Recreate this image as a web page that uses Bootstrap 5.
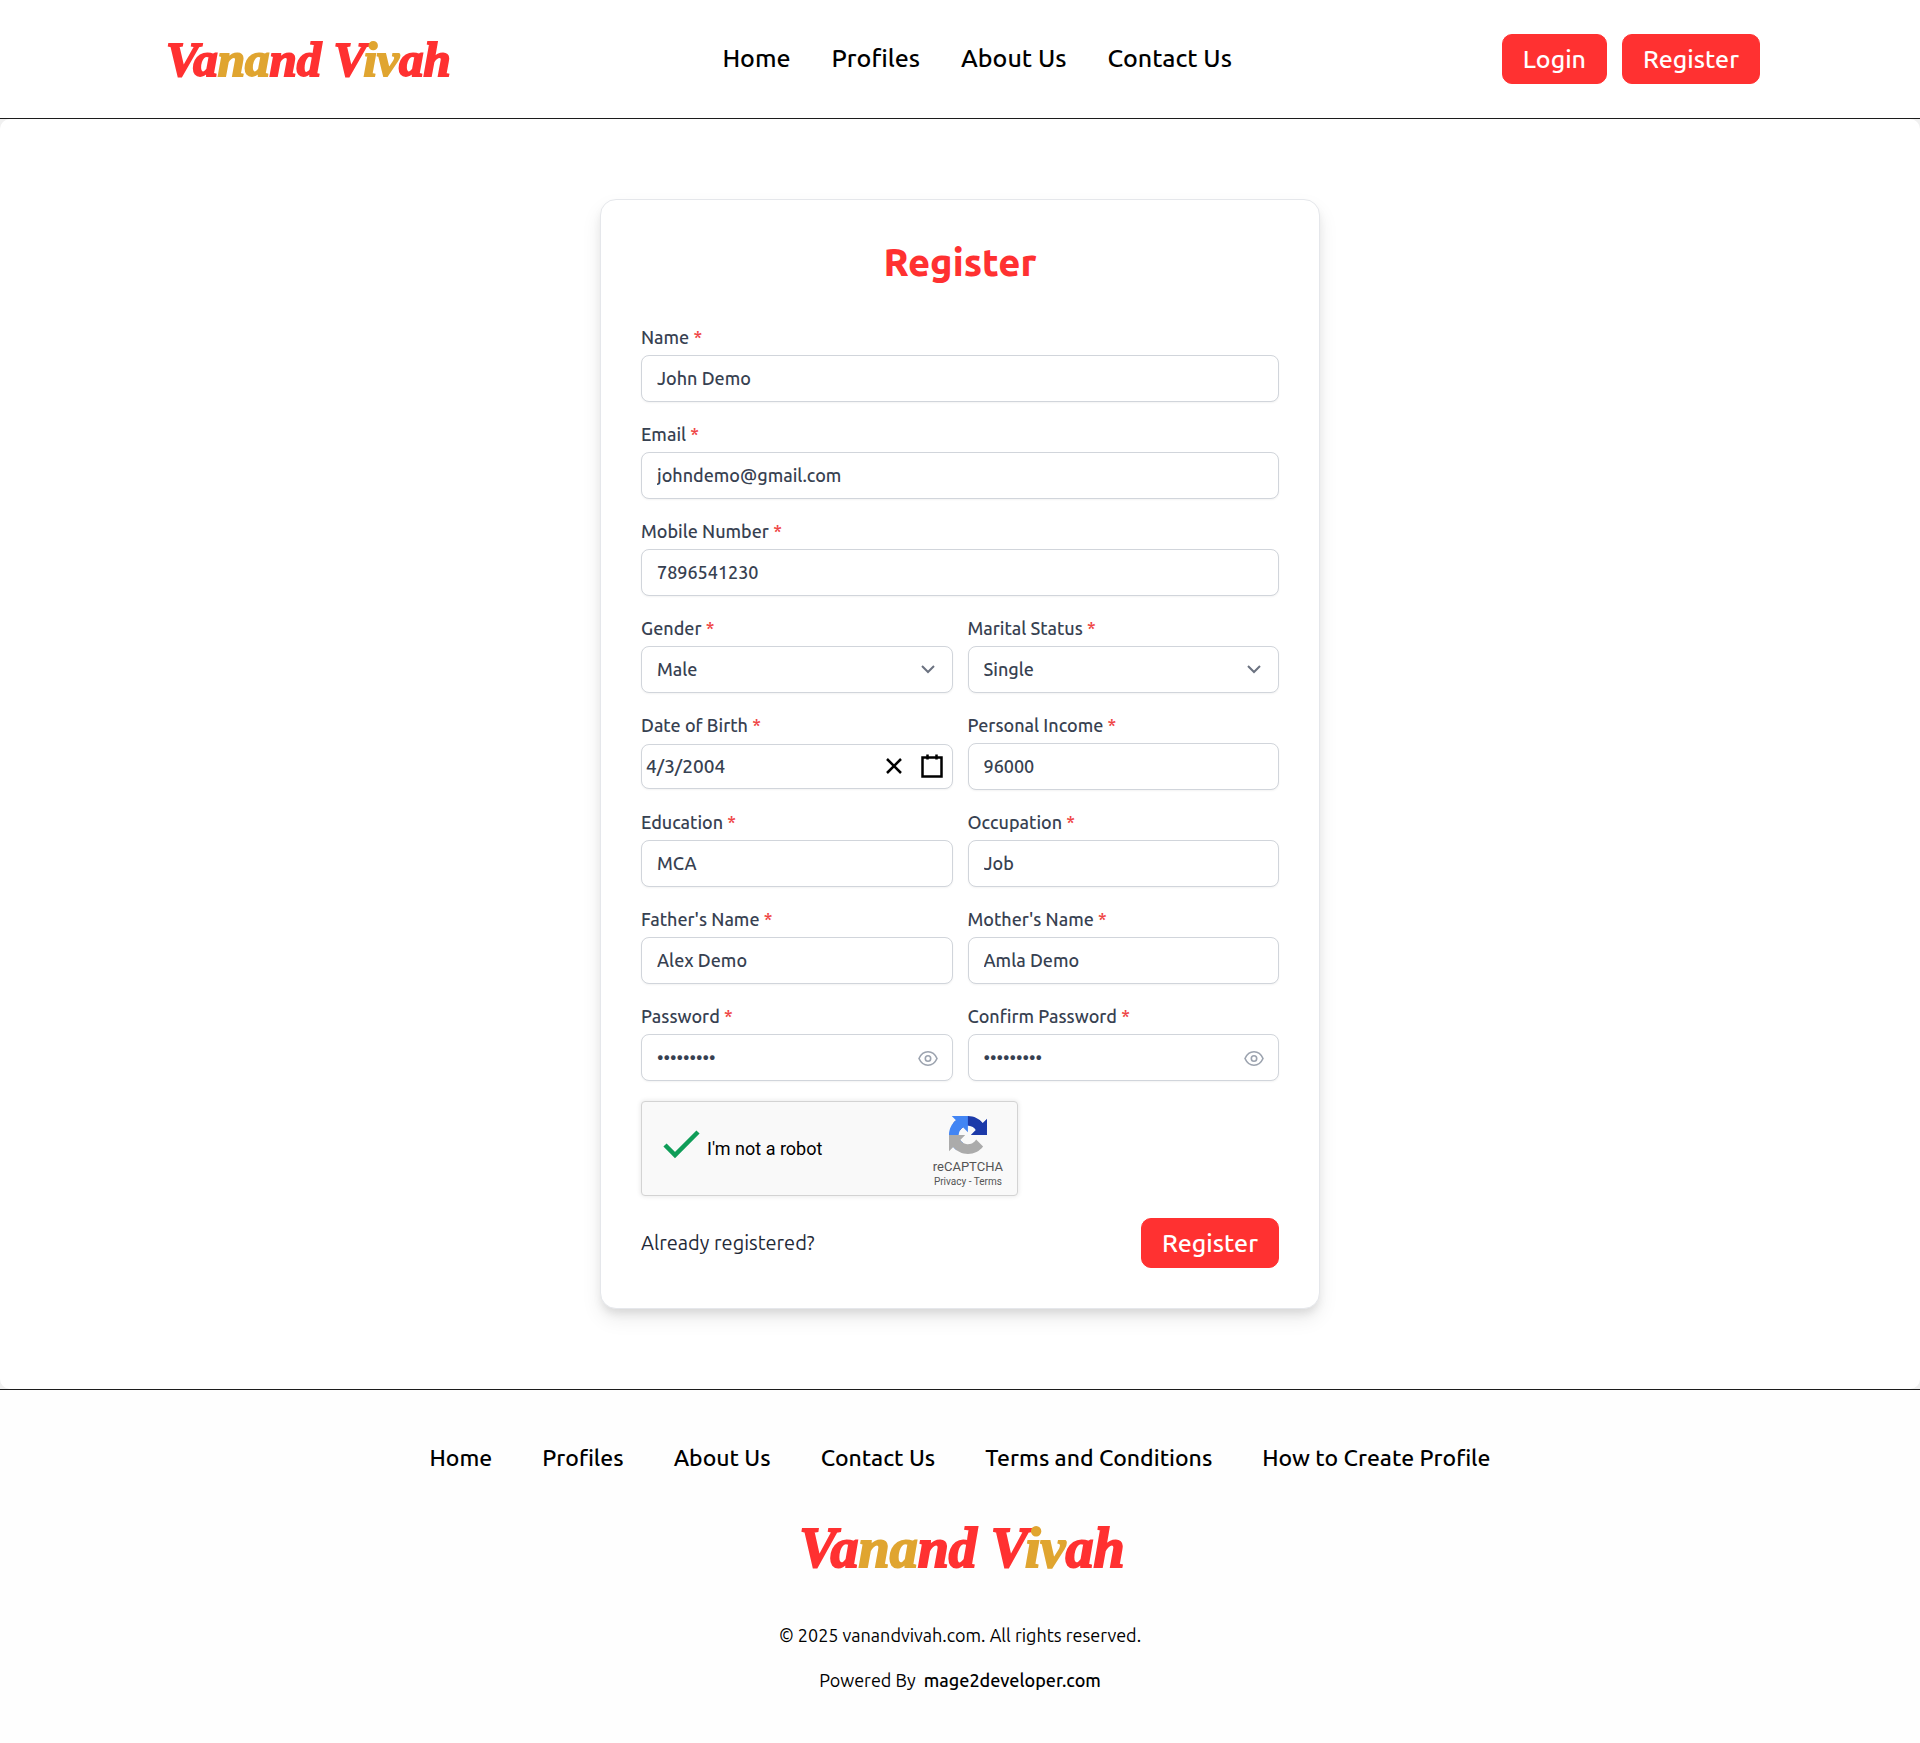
<!DOCTYPE html>
<html lang="en">
<head>
<meta charset="utf-8">
<meta name="viewport" content="width=device-width, initial-scale=1">
<title>Register - Vanand Vivah</title>
<link href="https://cdn.jsdelivr.net/npm/bootstrap@5.3.0/dist/css/bootstrap.min.css" rel="stylesheet">
<style>
  :root { --brand: #ff3131; --gold: #e0a530; --ink: #374151; --line: #d1d5db; }
  body { font-family: Ubuntu, "Noto Sans", sans-serif; background: #f0f0f0; color: #000; }
  a { color: inherit; text-decoration: none; }

  .site-header { background: #fff; border-bottom: 1px solid #1c1c1c; min-height: 119px; padding: 0 160px; }
  .site-links { gap: 41px; font-size: 25px; line-height: 36px; font-weight: 500; padding-bottom: 2px; }
  .account-buttons { gap: 15px; }
  .wordmark { font-family: "Liberation Serif", serif; font-weight: 700; font-style: italic; font-size: 49px; line-height: 56px; color: var(--brand); padding: 2px 2px 0 6px; -webkit-text-stroke: 2px currentColor; white-space: nowrap; }
  .wordmark span { color: var(--gold); }
  .wordmark-lg { font-size: 56px; line-height: 62px; margin-bottom: 44px; }

  .btn-brand { --bs-btn-color: #fff; --bs-btn-bg: var(--brand); --bs-btn-border-color: var(--brand); --bs-btn-hover-color: #fff; --bs-btn-hover-bg: #e62222; --bs-btn-hover-border-color: #e62222; --bs-btn-font-size: 25px; --bs-btn-font-weight: 500; --bs-btn-line-height: 34px; --bs-btn-padding-x: 20px; --bs-btn-padding-y: 7px; --bs-btn-border-radius: 10px; }

  .page-main { background: #fff; border-radius: 10px; padding: 80px 16px; }
  .register-card { max-width: 720px; padding: 40px; background: #fff; border: 1px solid #e5e7eb; border-radius: 16px; box-shadow: 0 10px 20px rgba(0,0,0,.08), 0 6px 10px -2px rgba(0,0,0,.1); }
  .register-title { color: var(--brand); font-size: 38px; font-weight: 800; line-height: 45px; margin-bottom: 40px; }

  .field-grid { --bs-gutter-x: 15px; --bs-gutter-y: 20px; margin-bottom: 20px; }
  .form-label { display: block; font-size: 18px; line-height: 24px; font-weight: 500; color: var(--ink); margin-bottom: 6px; }
  .form-label i { font-style: normal; color: #ef4444; }
  .form-control, .form-select { height: 47px; font-size: 18px; font-weight: 500; color: var(--ink); background-color: #fff; border: 1px solid var(--line); border-radius: 8px; padding: 0 15px 1px; box-shadow: 0 1px 2px rgba(0,0,0,.05); }
  .form-select { background-image: none; padding-right: 44px; }
  .field-icons { position: absolute; top: 0; bottom: 0; right: 15px; display: flex; align-items: center; }
  .field-icons button { border: 0; background: none; padding: 0; display: flex; }
  .chevron { pointer-events: none; right: 17px; }
  .date-box { padding: 1px 0; }
  .date-input { height: 45px; font-size: 19px; padding: 0 4px 1px; }
  .date-icons { right: 9px; gap: 14px; }

  .captcha { width: 377px; max-width: 100%; height: 95px; background: #f9f9f9; border: 1px solid #d3d3d3; border-radius: 4px; box-shadow: 0 0 4px 1px rgba(0,0,0,.08); font-family: Roboto, sans-serif; padding: 0 14px 0 20px; margin-bottom: 22px; }
  .captcha-label { font-size: 18px; line-height: 24px; gap: 7px; }
  .captcha-tick { appearance: none; width: 38px; height: 42px; margin: 0; background: none; }
  .captcha-brand { color: #555; font-size: 13px; line-height: 17px; padding-top: 7px; }
  .captcha-legal { font-size: 10px; line-height: 14px; }
  .already { font-size: 20px; line-height: 28px; color: #1f2937; }

  .site-footer { background: #fefefe; border-top: 1px solid #1c1c1c; padding: 52px 16px 50px; }
  .footer-links { gap: 10px 50px; font-size: 23px; line-height: 32px; font-weight: 500; margin-bottom: 41px; }
  .footer-note { font-size: 18px; line-height: 25px; }
</style>
</head>
<body>
<header class="site-header d-flex flex-wrap align-items-center justify-content-between">
  <a class="wordmark" href="#">Va<span>na</span>nd V<span>iv</span>ah</a>
  <nav class="site-links d-flex flex-wrap" aria-label="Main">
    <a href="#">Home</a><a href="#">Profiles</a><a href="#">About Us</a><a href="#">Contact Us</a>
  </nav>
  <div class="account-buttons d-flex">
    <button type="button" class="btn btn-brand">Login</button>
    <button type="button" class="btn btn-brand">Register</button>
  </div>
</header>

<main class="page-main">
  <form class="register-card mx-auto" onsubmit="return false">
    <h1 class="register-title text-center">Register</h1>
    <div class="row field-grid">
      <div class="col-12"><label class="form-label" for="name">Name <i>*</i></label><input class="form-control" id="name" value="John Demo"></div>
      <div class="col-12"><label class="form-label" for="email">Email <i>*</i></label><input class="form-control" type="email" id="email" value="johndemo@gmail.com"></div>
      <div class="col-12"><label class="form-label" for="mobile">Mobile Number <i>*</i></label><input class="form-control" type="tel" id="mobile" value="7896541230"></div>
      <div class="col-sm-6"><label class="form-label" for="gender">Gender <i>*</i></label>
        <div class="position-relative"><select class="form-select" id="gender"><option>Male</option><option>Female</option></select>
          <span class="field-icons chevron"><svg width="16" height="16" viewBox="0 0 16 16" fill="none" stroke="#6b7280" stroke-width="2"><path d="M2 4l6 6 6-6"/></svg></span></div></div>
      <div class="col-sm-6"><label class="form-label" for="marital">Marital Status <i>*</i></label>
        <div class="position-relative"><select class="form-select" id="marital"><option>Single</option><option>Divorced</option></select>
          <span class="field-icons chevron"><svg width="16" height="16" viewBox="0 0 16 16" fill="none" stroke="#6b7280" stroke-width="2"><path d="M2 4l6 6 6-6"/></svg></span></div></div>
      <div class="col-sm-6"><label class="form-label" for="dob">Date of Birth <i>*</i></label>
        <div class="date-box position-relative"><input class="form-control date-input" id="dob" value="4/3/2004">
          <span class="field-icons date-icons">
            <button type="button" aria-label="Clear date"><svg width="24" height="24" viewBox="0 0 24 24" fill="none" stroke="#000" stroke-width="2.5"><path d="M5 4l14 14M19 4L5 18"/></svg></button>
            <button type="button" aria-label="Open calendar"><svg width="24" height="26" viewBox="0 0 24 26" fill="none" stroke="#000" stroke-width="2.5"><path d="M2.500 3.500h19v19h-19zM7.500 .500v5M16.500 .500v5"/></svg></button>
          </span></div></div>
      <div class="col-sm-6"><label class="form-label" for="income">Personal Income <i>*</i></label><input class="form-control" id="income" value="96000"></div>
      <div class="col-sm-6"><label class="form-label" for="education">Education <i>*</i></label><input class="form-control" id="education" value="MCA"></div>
      <div class="col-sm-6"><label class="form-label" for="occupation">Occupation <i>*</i></label><input class="form-control" id="occupation" value="Job"></div>
      <div class="col-sm-6"><label class="form-label" for="father">Father's Name <i>*</i></label><input class="form-control" id="father" value="Alex Demo"></div>
      <div class="col-sm-6"><label class="form-label" for="mother">Mother's Name <i>*</i></label><input class="form-control" id="mother" value="Amla Demo"></div>
      <div class="col-sm-6"><label class="form-label" for="password">Password <i>*</i></label>
        <div class="position-relative"><input class="form-control" type="password" id="password" value="demo12345">
          <span class="field-icons"><button type="button" aria-label="Show password"><svg width="20" height="20" viewBox="0 0 20 20" fill="none" stroke="#9ca3af" stroke-width="1.600"><path d="M1 10.500C3 6 6 3.800 10 3.800s7 2.200 9 6.700c-2 4.500-5 6.700-9 6.700s-7-2.200-9-6.700z"/><circle cx="10" cy="10.500" r="2.700"/></svg></button></span></div></div>
      <div class="col-sm-6"><label class="form-label" for="confirm">Confirm Password <i>*</i></label>
        <div class="position-relative"><input class="form-control" type="password" id="confirm" value="demo12345">
          <span class="field-icons"><button type="button" aria-label="Show confirmed password"><svg width="20" height="20" viewBox="0 0 20 20" fill="none" stroke="#9ca3af" stroke-width="1.600"><path d="M1 10.500C3 6 6 3.800 10 3.800s7 2.200 9 6.700c-2 4.500-5 6.700-9 6.700s-7-2.200-9-6.700z"/><circle cx="10" cy="10.500" r="2.700"/></svg></button></span></div></div>
    </div>

    <div class="captcha d-flex align-items-center justify-content-between">
      <label class="captcha-label d-flex align-items-center" for="robot">
        <span class="position-relative d-flex"><input class="captcha-tick" type="checkbox" id="robot" checked>
          <svg class="position-absolute top-0 start-0" width="38" height="38" viewBox="0 0 38 38" fill="none" stroke="#0f9d58" stroke-width="4.500"><path d="M3 17l10 10L36 4"/></svg></span>
        I'm not a robot
      </label>
      <div class="captcha-brand text-center">
        <svg class="d-block mx-auto mb-1" width="38" height="38" viewBox="0 0 64 64">
          <path fill="#1c3aa9" d="M64 31.955a33 33 0 0 0-.037-1.380V4.687l-7.157 7.157C50.948 4.674 42.033.093 32.050.093c-10.389 0-19.619 4.960-25.458 12.641l11.731 11.854a15.550 15.550 0 0 1 4.754-5.334c2.050-1.600 4.952-2.906 8.968-2.906.485 0 .860.057 1.135.163 4.976.393 9.288 3.139 11.828 7.124l-8.304 8.304 27.295.016"/>
          <path fill="#4285f4" d="M31.862.094a33 33 0 0 0-1.380.037H4.594l7.157 7.157C4.582 13.147 0 22.061 0 32.045c0 10.388 4.960 19.618 12.641 25.457l11.854-11.731a15.550 15.550 0 0 1-5.334-4.754c-1.600-2.050-2.906-4.952-2.906-8.968 0-.485.057-.860.163-1.135.393-4.976 3.139-9.288 7.124-11.828l8.304 8.304.016-27.296"/>
          <path fill="#ababab" d="M.001 32.045a33 33 0 0 0 .037 1.380v25.888l7.157-7.157c5.859 7.170 14.773 11.751 24.757 11.751 10.389 0 19.618-4.960 25.458-12.641L45.678 39.412a15.550 15.550 0 0 1-4.754 5.334c-2.050 1.600-4.952 2.906-8.968 2.906-.485 0-.860-.057-1.135-.163-4.976-.393-9.288-3.139-11.828-7.124l8.304-8.304c-10.516.041-22.398.066-27.295-.016"/>
        </svg>
        <div>reCAPTCHA</div>
        <div class="captcha-legal"><a href="#">Privacy</a> - <a href="#">Terms</a></div>
      </div>
    </div>

    <div class="d-flex align-items-center justify-content-between">
      <a class="already" href="#">Already registered?</a>
      <button type="submit" class="btn btn-brand">Register</button>
    </div>
  </form>
</main>

<footer class="site-footer text-center">
  <nav class="footer-links d-flex flex-wrap justify-content-center" aria-label="Footer">
    <a href="#">Home</a><a href="#">Profiles</a><a href="#">About Us</a><a href="#">Contact Us</a><a href="#">Terms and Conditions</a><a href="#">How to Create Profile</a>
  </nav>
  <a class="wordmark wordmark-lg d-inline-block" href="#">Va<span>na</span>nd V<span>iv</span>ah</a>
  <p class="footer-note mb-0 pb-3">© 2025 vanandvivah.com. All rights reserved.</p>
  <p class="footer-note mb-0 pt-1">Powered By &nbsp;<a class="fw-medium" href="#">mage2developer.com</a></p>
</footer>
<script src="https://cdn.jsdelivr.net/npm/bootstrap@5.3.0/dist/js/bootstrap.bundle.min.js"></script>
</body>
</html>
